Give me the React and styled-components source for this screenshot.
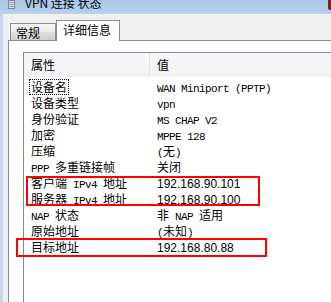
import React from "react";
import styled, { createGlobalStyle } from "styled-components";

const GlobalStyle = createGlobalStyle`
  html, body { margin: 0; padding: 0; }
  body {
    width: 331px;
    height: 302px;
    overflow: hidden;
    background: #f0f0f0;
    font-family: "Noto Sans CJK SC", "Noto Sans", sans-serif;
    font-size: 12px;
    color: #000;
  }
`;

const Window = styled.div`
  position: relative;
  width: 331px;
  height: 302px;
  display: flex;
  flex-direction: column;
  overflow: hidden;
  background: #f0f0f0;
`;

const TitleBar = styled.div`
  flex: none;
  height: 14px;
  display: flex;
  align-items: flex-start;
  padding-left: 8px;
  overflow: hidden;
  background: linear-gradient(#a7c5e5, #b9d1eb);
`;

const TitleIcon = styled.svg`
  flex: none;
  margin-right: 10px;
`;

const TitleText = styled.span`
  margin-top: -3px;
  line-height: 12px;
  white-space: pre;
`;

const CloseEdge = styled.div`
  margin-left: auto;
  width: 3px;
  height: 10px;
  background: #7d1f22;
  border-bottom-left-radius: 2px;
`;

const Frame = styled.div`
  flex: 1;
  min-height: 0;
  display: flex;
  flex-direction: column;
  border-left: 3px solid #c4d9ef;
  padding: 6px 0 0 5px;
`;

const TabRow = styled.div`
  position: relative;
  z-index: 1;
  display: flex;
  align-items: flex-end;
  padding-left: 2px;
  margin-bottom: -1px;
`;

const Tab = styled.div`
  box-sizing: border-box;
  width: ${(p) => p.$w}px;
  height: ${(p) => (p.$active ? 21 : 17)}px;
  margin-bottom: ${(p) => (p.$active ? 0 : 1)}px;
  padding: 1px 0 0 ${(p) => (p.$active ? 6 : 5)}px;
  border: 1px solid #898c95;
  border-bottom: none;
  background: ${(p) =>
    p.$active
      ? "#ffffff"
      : "linear-gradient(#f4f4f4 0%, #ececec 45%, #dddddd 55%, #cfcfcf 100%)"};
  line-height: 16px;
`;

const Panel = styled.div`
  flex: 1;
  display: flex;
  flex-direction: column;
  border: 1px solid #898c95;
  border-right: none;
  border-bottom: none;
  background: #ffffff;
  padding: 11px 0 0 14px;
`;

const List = styled.div`
  flex: 1;
  display: flex;
  flex-direction: column;
  border: 1px solid #828790;
  border-right: none;
  border-bottom: none;
`;

const Header = styled.div`
  display: grid;
  grid-template-columns: 126px 1fr;
  height: 24px;
  background: linear-gradient(#f6f7f8, #f0f1f3);
`;

const HeaderCell = styled.div`
  padding: 4px 0 0 7px;
  line-height: 16px;
  border-right: ${(p) => (p.$divider ? "1px solid #e2e3e6" : "none")};
`;

const Rows = styled.div`
  padding-top: 2px;
`;

const Row = styled.div`
  display: grid;
  grid-template-columns: 126px 1fr;
  height: 16px;
  line-height: 16px;
  white-space: pre;
`;

const LabelCell = styled.div`
  padding-left: 5px;
`;

const Label = styled.span`
  display: inline-block;
  padding: 0 1px;
  line-height: 14px;
  border: 1px dotted ${(p) => (p.$focused ? "#000" : "transparent")};
`;

const ValueCell = styled.div`
  padding-left: 7px;
`;

/* half-width latin, like the old bitmap font: 6px per char */
const Half = styled.span`
  font-family: "Liberation Mono", monospace;
  font-size: 11px;
  letter-spacing: -0.6px;
`;

const Ip = styled.span`
  font-family: "Liberation Sans", Arial, sans-serif;
  font-size: 12px;
`;

const Marker = styled.div`
  position: absolute;
  left: ${(p) => p.$x}px;
  top: ${(p) => p.$y}px;
  width: ${(p) => p.$w}px;
  height: ${(p) => p.$h}px;
  box-sizing: border-box;
  border: 2px solid #ff0000;
  pointer-events: none;
`;

const rows = [
  ["设备名", <Half>WAN Miniport (PPTP)</Half>],
  ["设备类型", <Half>vpn</Half>],
  ["身份验证", <Half>MS CHAP V2</Half>],
  ["加密", <Half>MPPE 128</Half>],
  ["压缩", <><Half>(</Half>无<Half>)</Half></>],
  [<><Half>PPP </Half>多重链接帧</>, "关闭"],
  [<>客户端<Half> IPv4 </Half>地址</>, <Ip>192.168.90.101</Ip>],
  [<>服务器<Half> IPv4 </Half>地址</>, <Ip>192.168.90.100</Ip>],
  [<><Half>NAP </Half>状态</>, <>非<Half> NAP </Half>适用</>],
  ["原始地址", <><Half>(</Half>未知<Half>)</Half></>],
  ["目标地址", <Ip>192.168.80.88</Ip>],
];

export default function App() {
  return (
    <Window>
      <GlobalStyle />
      <TitleBar>
        <TitleIcon width="7" height="9" viewBox="0 0 7 9">
          <rect x="0.5" y="0.5" width="6" height="8" fill="#dde3ec" stroke="#7c8899" />
          <line x1="1.5" y1="2.5" x2="5.5" y2="2.5" stroke="#8a96a8" />
          <line x1="1.5" y1="4.5" x2="5.5" y2="4.5" stroke="#8a96a8" />
          <line x1="1.5" y1="6.5" x2="5.5" y2="6.5" stroke="#8a96a8" />
        </TitleIcon>
        <TitleText>VPN 连接 状态</TitleText>
        <CloseEdge />
      </TitleBar>
      <Frame>
        <TabRow>
          <Tab $w={46}>常规</Tab>
          <Tab $w={64} $active>详细信息</Tab>
        </TabRow>
        <Panel>
          <List>
            <Header>
              <HeaderCell $divider>属性</HeaderCell>
              <HeaderCell>值</HeaderCell>
            </Header>
            <Rows>
              {rows.map(([label, value], i) => (
                <Row key={i}>
                  <LabelCell>
                    <Label $focused={i === 0}>{label}</Label>
                  </LabelCell>
                  <ValueCell>{value}</ValueCell>
                </Row>
              ))}
            </Rows>
          </List>
        </Panel>
      </Frame>
      <Marker $x={26} $y={176} $w={234} $h={30} />
      <Marker $x={16} $y={238} $w={251} $h={19} />
    </Window>
  );
}
